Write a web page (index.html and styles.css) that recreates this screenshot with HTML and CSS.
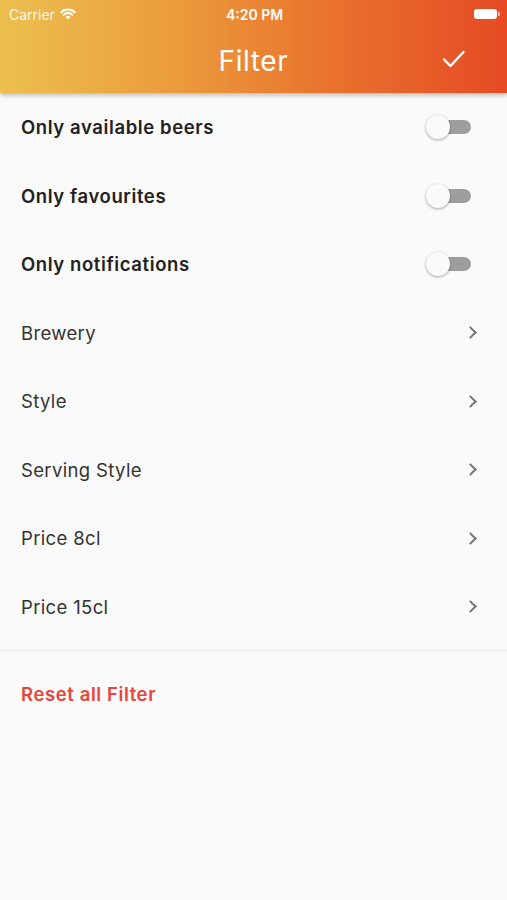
FILE: index.html
```html
<!DOCTYPE html>
<html lang="en">
<head>
    <meta charset="UTF-8">
    <meta name="viewport" content="width=device-width, initial-scale=1.0">
    <title>Filter</title>
    <link rel="stylesheet" href="styles.css">
</head>
<body>
    <header class="appBar">
        <div class="statusBar">
            <div class="carrier">
                Carrier
                <svg class="wifi" width="16" height="12" viewBox="0 0 16 12">
                    <path d="M8 11.5 L5.6 8.9 A3.4 3.4 0 0 1 10.4 8.9 Z" fill="#fff"/>
                    <path d="M3.6 6.9 A6.2 6.2 0 0 1 12.4 6.9" stroke="#fff" stroke-width="2" fill="none" stroke-linecap="round"/>
                    <path d="M1.2 4.3 A9.6 9.6 0 0 1 14.8 4.3" stroke="#fff" stroke-width="2" fill="none" stroke-linecap="round"/>
                </svg>
            </div>
            <div class="clock">4:20 PM</div>
            <div class="battery">
                <span class="batteryBody"></span>
                <span class="batteryTip"></span>
            </div>
        </div>
        <div class="toolbar">
            <h1 class="title">Filter</h1>
            <svg class="check" width="24" height="20" viewBox="0 0 24 20">
                <path d="M2 10.5 L8.5 17 L21.5 3" stroke="#fff" stroke-width="2.4" fill="none" stroke-linecap="round" stroke-linejoin="round"/>
            </svg>
        </div>
    </header>

    <main>
        <ul class="list">
            <li class="row bold">Only available beers <span class="switch"><span class="thumb"></span></span></li>
            <li class="row bold">Only favourites <span class="switch"><span class="thumb"></span></span></li>
            <li class="row bold">Only notifications <span class="switch"><span class="thumb"></span></span></li>
            <li class="row">Brewery <span class="chevron"></span></li>
            <li class="row">Style <span class="chevron"></span></li>
            <li class="row">Serving Style <span class="chevron"></span></li>
            <li class="row">Price 8cl <span class="chevron"></span></li>
            <li class="row">Price 15cl <span class="chevron"></span></li>
        </ul>
        <div class="divider"></div>
        <a href="#" class="reset">Reset all Filter</a>
    </main>
</body>
</html>
```

FILE: styles.css
```css
body {
    margin: 0;
    background-color: #fafafa;
    font-family: Inter, "Open Sans", sans-serif;
    color: #212121;
    height: 900px;
    overflow: hidden;
}

.appBar {
    background: linear-gradient(to right, #ecbf4f 0%, #eb9b3c 35%, #e9722e 65%, #e54b24 100%);
    height: 93px;
    box-shadow: 0 2px 5px rgba(0, 0, 0, 0.28);
    position: relative;
    z-index: 1;
    color: white;
}

.statusBar {
    height: 28px;
    display: flex;
    align-items: center;
    justify-content: space-between;
    padding: 0 7px 0 9px;
    font-size: 14px;
}

.carrier {
    display: flex;
    align-items: center;
    gap: 5px;
    width: 90px;
    color: rgba(255, 255, 255, 0.9);
}

.clock {
    font-weight: 600;
    font-size: 14px;
}

.battery {
    width: 90px;
    display: flex;
    justify-content: flex-end;
    align-items: center;
}

.batteryBody {
    width: 21px;
    height: 8px;
    background-color: white;
    border: 1.5px solid rgba(255, 255, 255, 0.6);
    border-radius: 3px;
}

.batteryTip {
    width: 2px;
    height: 4px;
    margin-left: 1px;
    background-color: rgba(255, 255, 255, 0.6);
    border-radius: 0 1px 1px 0;
}

.toolbar {
    height: 65px;
    display: flex;
    align-items: center;
    justify-content: center;
    position: relative;
}

.title {
    margin: 0;
    font-size: 28px;
    font-weight: 400;
    letter-spacing: 0.6px;
}

.check {
    position: absolute;
    right: 41px;
    top: 21px;
}

.list {
    list-style: none;
    margin: 0;
    padding: 0;
}

.row {
    height: 68.5px;
    display: flex;
    align-items: center;
    justify-content: space-between;
    padding: 0 32px 0 21px;
    font-size: 18.5px;
    letter-spacing: 0.35px;
    color: #333;
}

.row.bold {
    font-weight: 600;
    letter-spacing: 0.6px;
    color: #212121;
    padding-right: 36px;
}

.switch {
    width: 39px;
    height: 14px;
    background-color: #9e9e9e;
    border-radius: 7px;
    position: relative;
}

.thumb {
    position: absolute;
    left: -6px;
    top: -5px;
    width: 24px;
    height: 24px;
    border-radius: 50%;
    background-color: #fafafa;
    box-shadow: 0 1px 3px rgba(0, 0, 0, 0.35);
}

.chevron {
    width: 7px;
    height: 7px;
    border-top: 2px solid #757575;
    border-right: 2px solid #757575;
    transform: rotate(45deg);
}

.divider {
    margin-top: 9px;
    height: 1px;
    background-color: #ececec;
}

.reset {
    display: block;
    padding: 32px 21px;
    font-size: 18.5px;
    font-weight: 600;
    letter-spacing: 0.6px;
    color: #e8453a;
    text-decoration: none;
}
```
